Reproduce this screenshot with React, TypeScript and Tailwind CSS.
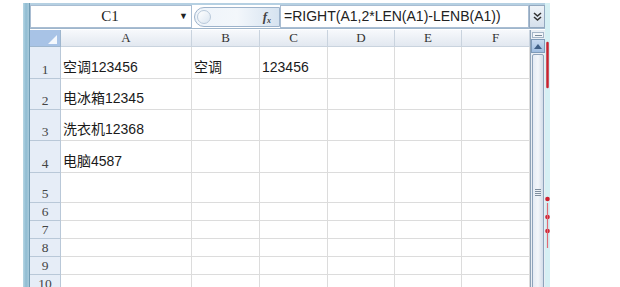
import React from "react";

const cols = [
  { key: "A", w: "w-[131px]" },
  { key: "B", w: "w-[68px]" },
  { key: "C", w: "w-[68px]" },
  { key: "D", w: "w-[67px]" },
  { key: "E", w: "w-[67px]" },
  { key: "F", w: "w-[68px]" },
];

const rows = [
  { n: "1", h: "h-[32px]", cells: ["空调123456", "空调", "123456"] },
  { n: "2", h: "h-[31px]", cells: ["电冰箱12345"] },
  { n: "3", h: "h-[31px]", cells: ["洗衣机12368"] },
  { n: "4", h: "h-[32px]", cells: ["电脑4587"] },
  { n: "5", h: "h-[30px]", cells: [] },
  { n: "6", h: "h-[18px]", cells: [] },
  { n: "7", h: "h-[18px]", cells: [] },
  { n: "8", h: "h-[18px]", cells: [] },
  { n: "9", h: "h-[18px]", cells: [] },
  { n: "10", h: "h-[18px]", cells: [] },
];

const cellFont = "font-['Liberation_Sans','Noto_Sans_CJK_SC',sans-serif]";
const headFont = "font-['Liberation_Serif','Noto_Sans_CJK_SC',serif]";

function FormulaBar() {
  return (
    <div className="flex h-[24px] border-b border-[#9fb6cc] bg-[#dfe9f4]">
      <div className={`flex w-[162px] items-center border border-[#a9bdd2] bg-white ${headFont}`}>
        <span className="flex-1 pl-[10px] text-center text-[15px] text-[#222]">C1</span>
        <span className="pr-[3px] text-[9px] text-[#222]">▼</span>
      </div>
      <div className="flex w-[88px] items-center bg-white">
        <div className="ml-[2px] flex h-[20px] flex-1 items-center rounded-l-full border border-[#9db3cb] bg-gradient-to-r from-[#eef4fa] via-[#f3f7fb] to-[#d6e3f0]">
          <div className="ml-[2px] h-[14px] w-[14px] rounded-full border border-[#b9c9da] bg-gradient-to-br from-white to-[#dbe6f1]" />
          <span className="ml-auto mr-[8px] font-['Liberation_Serif',serif] text-[13px] font-bold italic text-[#444]">
            f<sub className="text-[8px]">x</sub>
          </span>
        </div>
      </div>
      <div className={`flex flex-1 items-center border border-[#a9bdd2] bg-white pl-[3px] text-[14px] text-[#222] ${cellFont}`}>
        =RIGHT(A1,2*LEN(A1)-LENB(A1))
      </div>
      <div className="flex w-[16px] items-center justify-center border border-[#93a8bf] bg-gradient-to-b from-[#eef3f8] to-[#d5e0ec]">
        <svg width="9" height="10" viewBox="0 0 9 10">
          <path d="M1 1 L4.5 4 L8 1 M1 5 L4.5 8 L8 5" stroke="#333" strokeWidth="1.6" fill="none" />
        </svg>
      </div>
    </div>
  );
}

function Header() {
  return (
    <div className="flex h-[17px]">
      <div className="relative w-[31px] border-r border-b border-[#9eb6ce] bg-[#a8c3e6]">
        <svg className="absolute bottom-[2px] right-[3px]" width="9" height="9" viewBox="0 0 9 9">
          <path d="M9 0 L9 9 L0 9 Z" fill="#f4f8fd" />
        </svg>
      </div>
      {cols.map((c) => (
        <div
          key={c.key}
          className={`${c.w} flex items-center justify-center border-r border-b border-[#c9d3de] bg-gradient-to-b from-[#f7f9fc] to-[#e2e8f0] text-[13px] text-[#333] ${headFont}`}
        >
          {c.key}
        </div>
      ))}
    </div>
  );
}

function Grid() {
  return (
    <div className="flex flex-col">
      {rows.map((r) => (
        <div key={r.n} className={`flex ${r.h}`}>
          <div
            className={`flex w-[31px] items-end justify-center border-r border-b border-[#b9c8d8] bg-[#e6edf7] text-[13.5px] leading-[17px] text-[#444] ${headFont}`}
          >
            {r.n}
          </div>
          {cols.map((c, i) => (
            <div
              key={c.key}
              className={`${c.w} flex items-end overflow-visible whitespace-nowrap border-r border-b border-[#dcdcdc] pb-[2px] pl-[2px] text-[14px] leading-[18px] text-[#1a1a1a] ${cellFont}`}
            >
              {r.cells[i] ?? ""}
            </div>
          ))}
        </div>
      ))}
    </div>
  );
}

function ScrollBar() {
  return (
    <div className="flex w-[15px] flex-col border-l border-[#8fa3b8] bg-[#e9eef4]">
      <div className="mx-[1px] mt-[2px] flex h-[6px] items-center justify-center border border-[#a4b5c7] bg-[#f2f5f9]">
        <div className="h-[1px] w-[7px] bg-[#7a8a9a]" />
      </div>
      <div className="mt-[1px] flex h-[14px] items-center justify-center border border-[#7f9bb9] bg-gradient-to-b from-[#c7daf0] to-[#9fbde0]">
        <svg width="8" height="5" viewBox="0 0 8 5">
          <path d="M0 5 L4 0 L8 5 Z" fill="#3f5f86" />
        </svg>
      </div>
      <div className="mx-[1px] mt-[1px] flex flex-1 flex-col items-center rounded-t-[2px] border border-[#8ea3bb] bg-gradient-to-r from-[#e4ebf4] via-[#f3f6fa] to-[#d3dde9]">
        <div className="mt-[134px] flex flex-col gap-[1px]">
          <div className="h-[1px] w-[6px] bg-[#7f8e9e]" />
          <div className="h-[1px] w-[6px] bg-[#7f8e9e]" />
          <div className="h-[1px] w-[6px] bg-[#7f8e9e]" />
          <div className="h-[1px] w-[6px] bg-[#7f8e9e]" />
        </div>
      </div>
    </div>
  );
}

export default function App() {
  return (
    <div className="flex h-[287px] w-[620px] overflow-hidden bg-white">
      <div className="w-[23px]" />
      <div className="flex flex-col pt-[3px]">
        <div className="flex flex-1">
          <div className="w-[7px] border-r border-[#6f9bb3] bg-gradient-to-r from-[#b7d6e4] via-[#8fbcd2] to-[#a9cbdc]" />
          <div className="flex w-[515px] flex-col border-t-2 border-[#b5d0e2]">
            <FormulaBar />
            <div className="mt-[1px] flex flex-1">
              <div className="flex flex-col">
                <Header />
                <Grid />
              </div>
              <ScrollBar />
            </div>
          </div>
          <div className="w-[5px] bg-[#d6f0f4]">
            <svg width="5" height="284" viewBox="0 0 5 284">
              <path d="M2.5 40 L2.5 84" stroke="#c8222f" strokeWidth="2.5" strokeLinecap="round" />
              <circle cx="2.5" cy="196" r="2.3" fill="#d02030" />
              <circle cx="2.5" cy="214" r="2.3" fill="#d02030" />
              <circle cx="2.5" cy="228" r="2.3" fill="#d02030" />
              <path d="M2.5 200 L2.5 245" stroke="#e06a74" strokeWidth="1.2" />
            </svg>
          </div>
        </div>
      </div>
    </div>
  );
}
